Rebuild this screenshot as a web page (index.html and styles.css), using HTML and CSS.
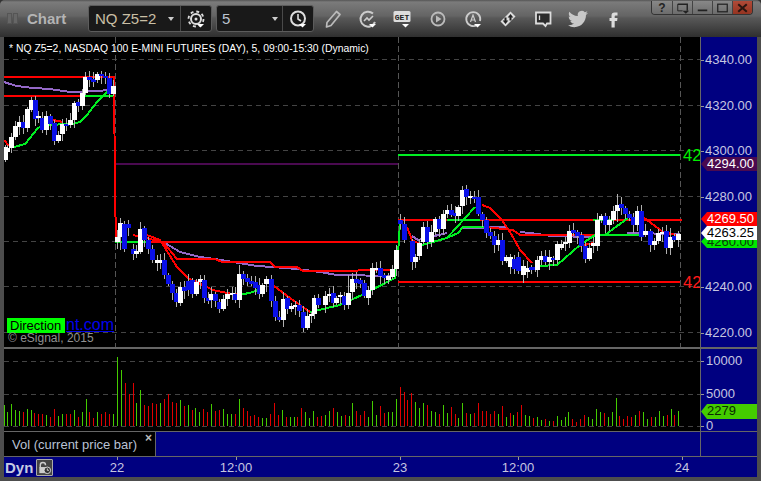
FILE: index.html
```html
<!DOCTYPE html>
<html lang="en">
<head>
<meta charset="utf-8">
<title>Chart</title>
<link rel="stylesheet" href="styles.css">
</head>
<body>
<div class="window">
  <header class="toolbar">
    <div class="grip"><i></i><i></i></div>
    <div class="title">Chart</div>
    <div class="combo combo-symbol">
      <span class="combo-text">NQ Z5=2</span><span class="caret"></span>
      <span class="combo-btn">
        <svg class="icon" viewBox="0 0 20 20"><circle cx="10" cy="10" r="7.5" fill="none" stroke="#ddd" stroke-width="1.8" stroke-dasharray="3 2.9"/><circle cx="10" cy="10" r="5" fill="none" stroke="#ddd" stroke-width="2"/><circle cx="10" cy="10" r="1.5" fill="#ddd"/><path d="M11 15h7l-3.5 3.5z" fill="#fff"/></svg>
      </span>
    </div>
    <div class="combo combo-interval">
      <span class="combo-text">5</span><span class="caret"></span>
      <span class="combo-btn">
        <svg class="icon" viewBox="0 0 20 20"><circle cx="10" cy="9.500" r="7" fill="none" stroke="#ddd" stroke-width="2"/><path d="M10 5v5l3 2" fill="none" stroke="#ddd" stroke-width="1.6"/><path d="M11 15h7l-3.5 3.5z" fill="#fff"/></svg>
      </span>
    </div>
    <div class="tools">
      <svg class="icon" viewBox="0 0 20 20"><path d="M13.5 2.5l3.5 3-9 11-4.5 1.5.5-4.5z" fill="none" stroke="#bbb" stroke-width="1.7" stroke-linejoin="round"/></svg>
      <svg class="icon" viewBox="0 0 20 20"><path d="M15 4.5A7.5 7.500 0 1 0 17 13" fill="none" stroke="#ccc" stroke-width="2"/><path d="M6 12l3-3 2 2 4-4" fill="none" stroke="#ccc" stroke-width="1.6"/><path d="M11 15h7l-3.5 3.5z" fill="#fff"/></svg>
      <svg class="icon" viewBox="0 0 20 20"><rect x="0.5" y="2" width="17" height="11" rx="1.5" fill="#ddd"/><text class="get" x="9" y="11">GET</text><path d="M9 15h7l-3.5 3.5z" fill="#fff"/></svg>
      <svg class="icon" viewBox="0 0 20 20"><circle cx="10" cy="10" r="6.5" fill="none" stroke="#bbb" stroke-width="1.8"/><path d="M8 6.5l5.500 3.5-5.500 3.5z" fill="#bbb"/></svg>
      <svg class="icon" viewBox="0 0 20 20"><path d="M14 16a7 7 0 1 1 3-4" fill="none" stroke="#ccc" stroke-width="1.8"/><path d="M7.5 13l2.5-7 2.5 7M8.5 11h3" fill="none" stroke="#ccc" stroke-width="1.2"/><path d="M11 15h7l-3.5 3.5z" fill="#fff"/></svg>
      <svg class="icon" viewBox="0 0 20 20"><path d="M12.5 2.5l5 5-10 10-5-5z" fill="#ddd"/><path d="M12.5 5l2.8 3.5h-1.8v3h-2v-3H9.7zM7.5 15l-2.8-3.5h1.800v-3h2v3h1.800z" fill="#222"/></svg>
      <svg class="icon" viewBox="0 0 20 20"><path d="M3 3.500h14.500v11h-3.500l-1.500 2.500-2.500-2.500H3z" fill="#2c2c2c" stroke="#ddd" stroke-width="1.8"/><path d="M6.5 6.500v4.500" stroke="#ddd" stroke-width="1.3"/></svg>
      <svg class="icon" viewBox="0 0 24 24"><path d="M23.953 4.570a10 10 0 01-2.825.775 4.958 4.958 0 002.163-2.723c-.951.555-2.005.959-3.127 1.184a4.920 4.920 0 00-8.384 4.482C7.690 8.095 4.067 6.130 1.640 3.162a4.822 4.822 0 00-.666 2.475c0 1.710.870 3.213 2.188 4.096a4.904 4.904 0 01-2.228-.616v.060a4.923 4.923 0 003.946 4.827 4.996 4.996 0 01-2.212.085 4.936 4.936 0 004.604 3.417 9.867 9.867 0 01-6.102 2.105c-.390 0-.779-.023-1.170-.067a13.995 13.995 0 007.557 2.209c9.053 0 13.998-7.496 13.998-13.985 0-.210 0-.420-.015-.630A9.935 9.935 0 0024 4.590z" fill="#c8c8c8"/></svg>
      <svg class="icon" viewBox="0 0 20 20"><path d="M11.5 3.500h3v3h-2c-.6 0-.8.300-.8.800V9h2.800l-.4 3h-2.400v6.500h-3.200V12H6.500V9h2V6.800c0-2.200 1.100-3.300 3-3.300z" fill="#ddd"/></svg>
    </div>
    <div class="winctl">
      <span class="winbtn help">?</span>
      <span class="winbtn"><svg viewBox="0 0 20 14"><path d="M5 3h10v7" fill="none" stroke="#222" stroke-width="1.5"/><path d="M5 3v7h5" fill="none" stroke="#222" stroke-width="1"/><path d="M10 10h7l-3.5 3z" fill="#222"/></svg></span>
      <span class="winbtn"><svg viewBox="0 0 20 14"><path d="M5 9.500h10" stroke="#222" stroke-width="2"/></svg></span>
      <span class="winbtn"><svg viewBox="0 0 20 14"><rect x="5" y="3" width="10" height="8" fill="none" stroke="#222" stroke-width="1.3"/></svg></span>
      <span class="winbtn close"><svg viewBox="0 0 20 14"><path d="M5.500 3l9 8M14.500 3l-9 8" stroke="#2a1510" stroke-width="2.2"/></svg></span>
    </div>
  </header>

  <section class="pane pane-price">
    <div class="plot">
      <svg id="price-plot" class="canvas" viewBox="4 37 696 310"></svg>
      <div class="caption">* NQ Z5=2, NASDAQ 100 E-MINI FUTURES (DAY), 5, 09:00-15:30 (Dynamic)</div>
      <span class="level level-green">42</span>
      <span class="level level-red">42</span>
      <span class="link">nt.com</span>
      <span class="study">Direction</span>
      <span class="copyright">© eSignal, 2015</span>
    </div>
    <div class="axis axis-price">
      <span class="tick t4340">4340.00</span>
      <span class="tick t4320">4320.00</span>
      <span class="tick t4300">4300.00</span>
      <span class="tick t4280">4280.00</span>
      <span class="tick t4240">4240.00</span>
      <span class="tick t4220">4220.00</span>
      <span class="flag flag-purple">4294.00</span>
      <span class="flag flag-red">4269.50</span>
      <span class="flag flag-lime">4260.00</span>
      <span class="flag flag-white">4263.25</span>
    </div>
  </section>

  <div class="divider"></div>

  <section class="pane pane-vol">
    <div class="plot">
      <svg id="vol-plot" class="canvas" viewBox="4 349 696 82"></svg>
    </div>
    <div class="axis axis-vol">
      <span class="tick v10000">10000</span>
      <span class="tick v5000">5000</span>
      <span class="tick v0">0</span>
      <span class="flag flag-vol">2279</span>
    </div>
  </section>

  <section class="pane pane-legend">
    <div class="legend-row">
      <div class="legend">Vol (current price bar)<span class="legend-x">×</span></div>
      <div class="band"></div>
    </div>
    <div class="axis"></div>
  </section>

  <footer class="timebar">
    <span class="dyn">Dyn</span>
    <span class="lock"><svg viewBox="0 0 16 16"><path d="M3.5 8V5.500a2.800 2.800 0 0 1 5.600 0" fill="none" stroke="#ccc" stroke-width="1.5"/><rect x="2.5" y="7.500" width="7.500" height="6.500" fill="#ccc"/><circle cx="11" cy="11" r="3.5" fill="#333" stroke="#ddd"/><path d="M11 9v2h1.700" fill="none" stroke="#ddd"/></svg></span>
    <span class="date d22">22</span>
    <span class="date d12a">12:00</span>
    <span class="date d23">23</span>
    <span class="date d12b">12:00</span>
    <span class="date d24">24</span>
  </footer>
</div>
<script src="chart.js"></script>
</body>
</html>
```

FILE: styles.css
```css
* { box-sizing: border-box; }
html, body { margin: 0; padding: 0; background: #333; }
body { width: 761px; height: 481px; overflow: hidden; font-family: "Liberation Sans", Arial, sans-serif; }

.window {
  width: 761px; height: 481px; display: flex; flex-direction: column;
  background: #4d4d4d; padding: 0 4px 4px; border-radius: 5px 5px 0 0; overflow: hidden;
}

/* toolbar */
.toolbar {
  height: 37px; margin: 0 -4px; padding-left: 7px; display: flex; align-items: center; flex: none;
  background: linear-gradient(#555 0, #7b7b7b 2px, #646464 16px, #585858 18px, #2f2f2f 37px);
}
.grip { width: 13px; margin-right: 7px; display: flex; gap: 1px; }
.grip i { width: 5px; height: 11px; border: 1px solid #555; background: #666; }
.title { width: 61px; font-size: 15px; font-weight: bold; color: #b4b4b4; }
.combo {
  height: 27px; display: flex; align-items: center; background: #191919;
  border: 1px solid #5c5c5c; border-radius: 3px;
}
.combo-symbol { width: 124px; }
.combo-interval { width: 98px; margin-left: 4px; }
.combo-text { flex: 1; padding-left: 6px; font-size: 15px; color: #c9bfa5; }
.combo-interval .combo-text { color: #bcc4d0; padding-left: 5px; }
.caret { width: 0; height: 0; margin-right: 6px; border: 3px solid transparent; border-top: 4px solid #ccc; border-bottom: 0; }
.combo-interval .caret { margin-right: 4px; }
.combo-btn { width: 31px; height: 25px; border-left: 1px solid #4a4a4a; display: flex; align-items: center; justify-content: center; }
.icon { width: 20px; height: 20px; display: block; flex: none; }
.tools { margin-left: 9px; display: flex; gap: 15px; align-items: center; }
.get { font: bold 8px "Liberation Mono", monospace; fill: #222; text-anchor: middle; }
.winctl {
  margin-left: auto; margin-right: 8px; align-self: flex-start; margin-top: 1px; height: 14px; display: flex;
  border: 1px solid #333; border-top: 0; border-radius: 0 0 4px 4px; overflow: hidden;
}
.winbtn {
  width: 20px; height: 14px; display: flex; align-items: center; justify-content: center;
  background: linear-gradient(#888, #6a6a6a); border-left: 1px solid #444; font-size: 12px; font-weight: bold; color: #222; line-height: 14px;
}
.winbtn:first-child { border-left: 0; }
.winbtn svg { width: 20px; height: 14px; display: block; }
.close { background: linear-gradient(#b04a38, #93321f); }

/* panes */
.pane { display: flex; flex: none; }
.pane-price { height: 310px; }
.pane-vol { height: 83px; border-bottom: 1px solid #666; }
.pane-legend { height: 25px; border-bottom: 1px solid #666; }
.divider { height: 2px; background: #666; flex: none; }
.plot { width: 697px; height: 100%; position: relative; background: #000; border-right: 1px solid #666; overflow: hidden; flex: none; }
.canvas { width: 696px; height: 100%; display: block; }
.pane-vol .canvas { height: 82px; }
.axis { flex: 1; position: relative; background: #000080; }

.tick, .flag { position: absolute; font-size: 13px; line-height: 14px; white-space: nowrap; }
.tick { left: 4px; color: #c6c6e0; }
.tick::before { content: ""; position: absolute; left: -4px; top: 7px; width: 3px; height: 1px; background: #999; }
.t4340 { top: 16px; } .t4320 { top: 62px; } .t4300 { top: 107px; } .t4280 { top: 153px; } .t4240 { top: 243px; } .t4220 { top: 289px; }
.v10000 { top: 5px; } .v5000 { top: 38px; } .v0 { top: 70px; }
.flag {
  left: 0; width: 56px; height: 14px; padding-left: 6px;
  clip-path: polygon(0 50%, 6px 0, 100% 0, 100% 100%, 6px 100%);
}
.flag-purple { top: 120px; background: #4a0a4f; color: #fff; }
.flag-red { top: 175px; background: #ff0000; color: #fff; }
.flag-lime { top: 198px; height: 13px; background: #00e600; color: #0a3a0a; }
.flag-white { top: 189px; background: #fff; color: #000; }
.axis-vol .tick { left: 5px; }
.axis-vol .tick::before { left: -5px; }
.flag-vol { top: 55px; height: 15px; background: #44cc00; color: #0a2a00; }

/* overlays on the price plot */
.caption { position: absolute; left: 5px; top: 5px; font-size: 10.4px; line-height: 14px; color: #fff; white-space: nowrap; }
.level { position: absolute; left: 679px; font-size: 16.5px; line-height: 18px; }
.level-green { top: 109px; color: #00ee00; }
.level-red { top: 236px; color: #ff1a1a; }
.link { position: absolute; left: 62px; top: 279px; font-size: 16px; line-height: 18px; color: #0000ee; text-decoration: underline; }
.study { position: absolute; left: 3px; top: 281px; width: 58px; height: 15px; padding-left: 3px; background: #00ff00; color: #000; font-size: 13px; line-height: 15px; }
.copyright { position: absolute; left: 4px; top: 295px; font-size: 12px; line-height: 13px; color: #909090; }

/* legend */
.legend-row { width: 697px; display: flex; border-right: 1px solid #666; background: #000; flex: none; }
.legend { width: 151px; padding: 4px 0 0 8px; font-size: 13px; line-height: 18px; color: #b9c2d4; position: relative; flex: none; }
.legend-x { position: absolute; left: 141px; top: 0; font-size: 12px; line-height: 12px; font-weight: bold; color: #bbb; }
.band { flex: 1; background: #000080; border-left: 1px solid #666; }

/* time axis */
.timebar { height: 20px; flex: none; position: relative; background: #000080; display: flex; align-items: center; }
.dyn { margin-left: 1px; font-size: 15px; font-weight: bold; color: #c6cbe4; width: 31px; }
.lock { width: 17px; height: 17px; border: 1px solid #aaa; background: #444; border-radius: 1px; }
.lock svg { display: block; width: 15px; height: 15px; }
.date { position: absolute; top: 3px; width: 40px; text-align: center; font-size: 13px; line-height: 16px; color: #c6c6e0; }
.date::before { content: ""; position: absolute; left: 20px; top: -3px; width: 1px; height: 3px; background: #999; }
.d22 { left: 93px; } .d12a { left: 212px; } .d23 { left: 376px; } .d12b { left: 494px; } .d24 { left: 658px; }
```

FILE: chart.js
```js
var NS = "http://www.w3.org/2000/svg";

function add(svg, name, attrs) {
  var el = document.createElementNS(NS, name);
  for (var k in attrs) el.setAttribute(k, attrs[k]);
  svg.appendChild(el);
}

var RED = "#ff0000", GREEN = "#00ee22", PURPLE = "#9468c8", PLUM = "#4a0a50";

/* ---------- price pane ---------- */
var price = document.getElementById("price-plot");

[59, 105, 150, 196, 241, 286, 332].forEach(function (y) {
  add(price, "line", { x1: 4, x2: 700, y1: y + 0.5, y2: y + 0.5, stroke: "#444", "stroke-dasharray": "5 4" });
});
[115, 398, 680].forEach(function (x) {
  add(price, "line", { x1: x + 0.5, x2: x + 0.5, y1: 37, y2: 347, stroke: "#555", "stroke-dasharray": "6 3" });
});

var lines = [
  [PLUM, "115,164 398,164"],
  [PURPLE, "4,82 10,84 17,86 33,88 50,89 70,92 100,91 107,90"],
  [PURPLE, "165,243 180,252 200,257 215,259 257,266 273,267 297,269 320,272 337,275 393,276"],
  [PURPLE, "412,236 418,240 447,233"],
  [PURPLE, "463,228 507,227"],
  [PURPLE, "520,232 530,233 552,236 593,237"],
  [PURPLE, "627,233 680,234"],
  [RED, "4,77 115,77"],
  [RED, "4,96 115,96"],
  [GREEN, "85,96 113,96"],
  [GREEN, "14,147 25,144 30,138 38,128 44,125 72,124 80,122 87,115 97,102 107,92 113,88"],
  [RED, "4,140 9,146"],
  [RED, "53,120 63,122"],
  [GREEN, "115,242 146,242"],
  [RED, "114,77 115,190 116,242"],
  [RED, "146,242 398,242"],
  [RED, "133,235 163,242 177,259 215,259 222,262 270,262 275,267 297,267 303,271 320,271 397,270"],
  [RED, "147,235 160,240 177,267 188,278 213,290 227,293 240,295"],
  [GREEN, "240,295 253,292 262,288"],
  [RED, "270,283 290,298 310,312"],
  [GREEN, "310,312 340,305 362,295 395,278 397,260 399,242 400,220"],
  [GREEN, "398,155 680,155"],
  [RED, "398,282 680,282"],
  [RED, "398,220 682,220"],
  [RED, "407,227 412,240 422,245"],
  [GREEN, "422,245 447,238 475,207"],
  [GREEN, "447,238 458,233 463,227 485,227"],
  [GREEN, "447,220 480,220"],
  [RED, "482,205 490,208 502,220 513,237 520,250 532,263"],
  [RED, "485,227 513,230 520,235 600,235"],
  [GREEN, "540,266 557,265 580,245 595,235 643,235"],
  [GREEN, "605,235 628,218"],
  [GREEN, "593,220 613,220"],
  [RED, "580,246 593,243"],
  [RED, "643,217 663,232 680,236"]
];
lines.forEach(function (l) {
  add(price, "polyline", { points: l[1], fill: "none", stroke: l[0], "stroke-width": 2, "shape-rendering": "crispEdges" });
});

/* candles: x, body top, body bottom, colour (w = up, b = down) */
var candles = "5 147 160 w,7 148 152 w,11 137 148 w,15 126 137 w,19 122 127 w,23 122 128 b,27 109 128 w,31 100 110 w,35 100 119 b,38 116 118 w,42 118 130 b,46 116 130 w,50 116 124 b,54 123 141 b,58 135 141 w,62 124 134 w,66 124 126 b,70 120 125 w,74 103 120 w,78 102 106 b,82 93 106 w,85 77 93 w,89 77 80 b,93 79 82 b,97 74 80 w,101 74 76 b,105 76 78 b,109 78 94 b,113 86 94 w," +
  "117 237 242 w,120 223 237 w,124 224 249 b,128 224 228 b,133 249 254 b,136 251 254 w,140 229 252 w,144 228 240 b,148 240 249 b,152 249 260 b,157 260 263 w,160 260 263 w,164 260 275 b,168 275 284 b,172 284 293 b,176 293 302 b,180 287 303 w,184 287 291 b,188 281 290 b,192 280 294 b,196 282 294 w,200 279 282 w,204 280 298 b,208 298 301 b,211 294 300 w,215 294 301 b,219 302 309 b,223 299 309 w,227 294 299 w,232 293 295 w,235 294 300 b,239 274 300 w,243 274 279 b,247 278 282 b,251 281 284 b,255 282 288 b,259 285 294 b,262 285 294 w,266 279 284 w,271 279 301 b,275 301 317 b,279 317 320 b,283 299 320 w,287 298 309 b,291 306 309 w,295 305 307 w,299 305 311 b,303 312 328 b,307 316 328 w,311 314 316 w,314 298 314 w,318 298 305 b," +
  "325 296 305 w,329 294 296 w,333 293 303 b,336 298 303 w,340 295 297 w,344 296 305 b,348 293 305 w,352 279 292 w,356 279 283 b,360 280 284 b,364 283 296 b,368 290 298 w,372 268 290 w,376 268 270 w,380 268 276 b,384 275 278 b,388 276 280 w,392 269 277 w,396 250 269 w,400 220 224 b,404 224 240 b,412 241 262 b,415 257 262 w,419 243 256 w,423 227 242 w,427 227 242 b,431 232 242 w,435 219 232 w,439 219 229 b,443 214 229 w,447 210 214 w,451 210 215 b,455 213 216 b,458 207 216 w,462 190 206 w,466 189 197 b,470 196 198 w,474 197 199 b,478 197 214 b,482 214 220 b,486 220 233 b,490 232 236 b,494 236 245 b,498 240 245 w,502 240 261 b,506 257 261 w,510 257 267 w,514 259 269 b,518 257 271 b," +
  "523 266 275 w,527 268 272 w,531 267 270 b,535 267 270 b,537 260 270 w,541 256 260 w,545 256 262 b,549 257 262 w,553 258 260 b,557 244 260 w,561 244 248 w,565 242 244 w,569 231 243 w,573 230 233 b,577 232 236 b,581 235 246 b,585 246 259 b,589 248 259 w,593 243 246 w,597 220 246 w,601 216 220 w,605 216 225 b,609 220 225 w,613 211 220 w,617 205 211 w,621 204 208 b,625 208 214 b,629 214 218 b,633 217 225 b,637 211 225 w,641 211 237 b,645 231 235 w,650 231 245 b,654 241 245 w,658 233 241 w,662 232 234 w,666 231 248 b,670 237 248 w,674 236 240 b,678 234 240 w";

var longWicks = { 120: [218, 250], 46: [111, 135], 31: [97, 112], 239: [265, 308], 462: [186, 214], 617: [194, 222], 337: [290, 309], 670: [228, 255], 348: [275, 309] };

candles.split(",").forEach(function (s, i) {
  var p = s.split(" "), x = +p[0], top = +p[1], bot = +p[2];
  var w = longWicks[x] || [top - (2 + (i * 7) % 6), bot + (2 + (i * 5) % 7)];
  add(price, "rect", { x: x, y: w[0], width: 1, height: w[1] - w[0], fill: "#b0b0b0" });
});
candles.split(",").forEach(function (s) {
  var p = s.split(" "), x = +p[0], top = +p[1], bot = +p[2];
  add(price, "rect", { x: x - 2, y: top, width: 5, height: bot - top, fill: p[3] === "w" ? "#ffffff" : "#0a10e8" });
});

/* ---------- volume pane ---------- */
var vol = document.getElementById("vol-plot");
[361, 394, 426].forEach(function (y) {
  add(vol, "line", { x1: 4, x2: 700, y1: y + 0.5, y2: y + 0.5, stroke: "#444", "stroke-dasharray": "5 4" });
});

/* bars read from the chart: [origin x, baseline, "x top colour, ..."] in 3x scale */
var volume = [
  [0, 379, "12 315 g,22 338 g,34 312 g,46 330 g,58 335 g,70 338 r,82 328 g,93 332 g,103 340 r,115 342 r,127 342 r,139 345 g,151 353 r,163 327 r,175 350 g,187 342 g,199 342 r,211 342 r,223 330 g,235 353 r,247 338 g,257 297 g,268 336 r,280 354 r,292 336 g,304 342 r,316 336 r,328 342 r,340 342 g,352 171 g,364 210 g,376 249 r,388 282 r,400 249 r,408 309 g,421 270 g,433 315 r,445 318 r,457 309 r,469 312 r,481 309 g,493 297 r,505 282 r,517 306 r,529 309 r,541 300 g,553 318 r,565 315 g,575 330 r,586 324 g,598 336 g,610 327 r,622 336 r,634 312 g,646 333 r,658 330 r,670 327 g,682 342 g,694 342 g,706 342 r,718 297 g,730 324 r,740 333 r"],
  [250, 259, "0 228 r,13 225 r,25 231 r,37 234 g,49 234 g,61 222 r,73 189 r,85 225 r,97 210 g,109 231 r,121 231 g,133 231 g,142 231 r,154 204 r,166 216 g,178 234 g,190 213 g,202 231 r,214 228 r,226 225 g,238 213 g,250 204 r,262 216 g,274 228 g,286 225 r,298 228 g,307 189 g,319 213 r,331 225 r,343 213 r,355 231 g,367 183 g,379 225 g,391 198 r,403 219 r,415 216 g,427 216 g,439 177 g,451 141 r,463 156 r,472 180 r,484 159 r,496 186 g,508 204 g,520 189 g,532 195 r,544 213 g,556 216 g,568 222 r,580 195 g,592 219 g,604 201 r,616 222 r,625 234 g,637 189 g,649 219 r,661 222 g,673 219 r,685 189 r,697 213 r,709 213 r,721 222 r,733 213 r,745 222 g,757 198 r,769 231 g"],
  [510, 259, "0 219 r,10 225 g,22 216 r,34 195 r,46 225 g,58 228 g,70 234 r,82 231 g,94 240 g,106 237 r,118 243 g,130 243 r,142 228 g,154 240 g,166 231 g,175 216 g,187 237 r,199 246 r,211 237 r,223 225 r,235 231 g,247 237 g,259 207 g,271 216 g,283 219 r,295 231 g,307 216 g,319 174 g,328 228 r,340 237 r,352 228 r,364 231 r,376 225 g,388 213 r,400 216 g,412 237 g,424 231 r,436 231 g,448 213 g,460 228 g,472 225 r,484 207 g,493 225 r,505 213 g"]
];
volume.forEach(function (seg) {
  seg[2].split(",").forEach(function (s) {
    var p = s.split(" "), x = Math.round(seg[0] + p[0] / 3), h = Math.round((seg[1] - p[1]) / 3);
    add(vol, "rect", { x: x, y: 426 - h, width: 1, height: h, fill: p[2] === "g" ? "#44cc00" : "#e00000" });
  });
});
```
